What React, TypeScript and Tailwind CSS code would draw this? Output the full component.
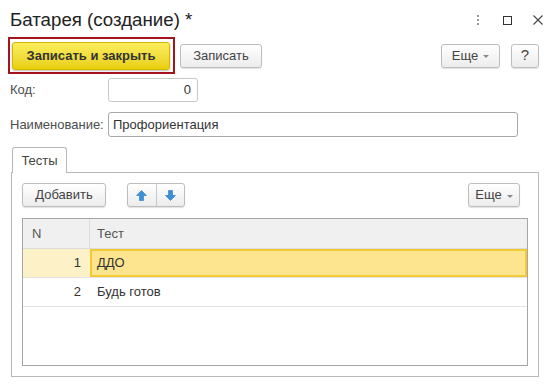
import React from 'react';

function Btn({ className = '', children }: { className?: string; children?: React.ReactNode }) {
  return (
    <div
      className={
        'flex items-center justify-center h-[24px] rounded-[3px] border border-[#bdbdbd] bg-gradient-to-b from-white to-[#ececec] text-[#444] shadow-[0_1px_1px_rgba(0,0,0,0.12)] ' +
        className
      }
    >
      {children}
    </div>
  );
}

function Caret() {
  return <span className="ml-[5px] inline-block w-0 h-0 border-l-[3px] border-r-[3px] border-t-[3px] border-l-transparent border-r-transparent border-t-[#888] mt-[2px]" />;
}

function Arrow({ down }: { down?: boolean }) {
  return (
    <svg width="11" height="11" viewBox="0 0 11 11" className={down ? 'rotate-180' : ''}>
      <path d="M5.5 0.5 L10.5 5.5 L7.5 5.5 L7.5 10.5 L3.5 10.5 L3.5 5.5 L0.5 5.5 Z" fill="#3b8fd6" stroke="#2a78c0" strokeWidth="0.6" />
    </svg>
  );
}

export default function App() {
  return (
    <div className="w-[558px] h-[385px] bg-white font-['Liberation_Sans',Arial,sans-serif] text-[13px] text-[#404040] overflow-hidden">
      {/* title */}
      <div className="flex items-center h-[37px] pl-[10px] pr-[15px] pt-[3px]">
        <div className="text-[18.7px] text-[#222]">Батарея (создание) *</div>
        <div className="ml-auto flex items-center">
          <div className="flex flex-col gap-[2px] mr-[24px]">
            <span className="w-[2px] h-[2px] bg-[#999]" />
            <span className="w-[2px] h-[2px] bg-[#999]" />
            <span className="w-[2px] h-[2px] bg-[#999]" />
          </div>
          <div className="w-[9px] h-[9px] border border-[#333] mr-[21px]" />
          <svg width="10" height="10" viewBox="0 0 10 10">
            <path d="M0.5 0.5 L9.5 9.5 M9.5 0.5 L0.5 9.5" stroke="#444" strokeWidth="1.1" />
          </svg>
        </div>
      </div>

      {/* command bar */}
      <div className="flex items-center h-[37px] pl-[8px] pr-[19px]">
        <div className="w-[167px] h-[37px] border-2 border-[#a5141c] pt-[3px] px-[2px]">
          <div className="h-[28px] w-[158px] flex items-center justify-center rounded-[3px] border border-[#d2b600] bg-gradient-to-b from-[#fbee5c] to-[#e9cf00] font-bold text-[#333] shadow-[0_1px_2px_rgba(0,0,0,0.25)]">
            Записать и закрыть
          </div>
        </div>
        <Btn className="ml-[5px] w-[82px]">Записать</Btn>
        <Btn className="ml-auto w-[59px]">
          Еще
          <Caret />
        </Btn>
        <Btn className="ml-[11px] w-[28px] text-[15px] text-[#333]">?</Btn>
      </div>

      {/* fields */}
      <div className="flex items-center mt-[4px] pl-[10px]">
        <div className="w-[98px] text-[#4d4d4d]">Код:</div>
        <div className="w-[90px] h-[24px] rounded-[3px] border border-[#c8c8c8] flex items-center justify-end pr-[6px] text-[#333]">0</div>
      </div>
      <div className="flex items-center mt-[10px] pl-[10px]">
        <div className="w-[98px] text-[#4d4d4d]">Наименование:</div>
        <div className="w-[410px] h-[25px] rounded-[3px] border border-[#a8a8a8] flex items-center pl-[4px] text-[#333]">Профориентация</div>
      </div>

      {/* tabs */}
      <div className="mt-[10px] pl-[12px] flex">
        <div className="relative z-10 w-[55px] h-[26px] border border-b-0 border-[#b8b8b8] rounded-t-[3px] bg-white flex items-center justify-center text-[#444]">
          Тесты
        </div>
      </div>
      <div className="-mt-px ml-[11px] w-[528px] h-[205px] border border-[#b8b8b8] pt-[10px] px-[10px]">
        <div className="flex items-center pr-[8px]">
          <Btn className="w-[84px]">Добавить</Btn>
          <div className="ml-[21px] w-[58px] h-[24px] flex rounded-[3px] border border-[#bdbdbd] bg-gradient-to-b from-white to-[#ececec] shadow-[0_1px_1px_rgba(0,0,0,0.12)]">
            <div className="flex-1 flex items-center justify-center border-r border-[#c8c8c8]">
              <Arrow />
            </div>
            <div className="flex-1 flex items-center justify-center">
              <Arrow down />
            </div>
          </div>
          <Btn className="ml-auto w-[52px]">
            Еще
            <Caret />
          </Btn>
        </div>

        <div className="mt-[11px] w-[506px] h-[148px] border border-[#a6a6a6] flex flex-col">
          <div className="flex h-[30px] bg-[#f0f0f0] border-b border-[#dcdcdc] text-[#555]">
            <div className="w-[67px] border-r border-[#dcdcdc] flex items-center pl-[9px]">N</div>
            <div className="flex-1 flex items-center pl-[7px]">Тест</div>
          </div>
          <div className="flex h-[29px] border-b border-[#e3e3e3] text-[#333]">
            <div className="w-[67px] bg-[#fdf1c8] flex items-center justify-end pr-[9px]">1</div>
            <div className="flex-1 bg-[#fde48e] border-2 border-[#f3c934] flex items-center pl-[5px]">ДДО</div>
          </div>
          <div className="flex h-[29px] border-b border-[#e3e3e3] text-[#333]">
            <div className="w-[67px] flex items-center justify-end pr-[9px]">2</div>
            <div className="flex-1 flex items-center pl-[7px]">Будь готов</div>
          </div>
        </div>
      </div>
    </div>
  );
}
